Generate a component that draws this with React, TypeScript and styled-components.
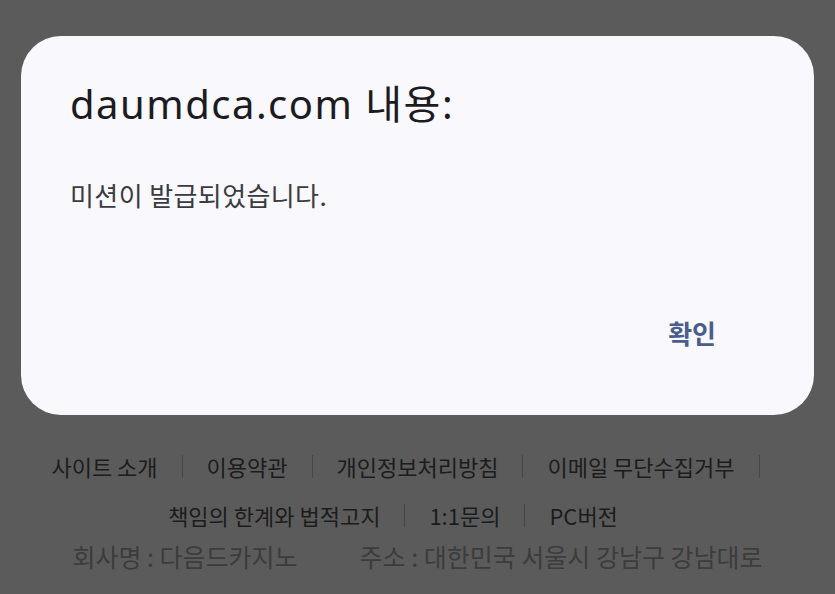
import { createGlobalStyle, styled } from "styled-components";

const GlobalStyle = createGlobalStyle`
  html, body {
    margin: 0;
    padding: 0;
    background: #5b5b5b;
    overflow: hidden;
  }
  body {
    font-family: "Noto Sans", "Noto Sans CJK KR", sans-serif;
  }
`;

const Page = styled.div`
  width: 835px;
  height: 594px;
  padding: 36px 21px 0;
  box-sizing: border-box;
`;

const Dialog = styled.div`
  height: 379px;
  box-sizing: border-box;
  background: #f8f8fd;
  border-radius: 40px;
  padding: 44px 49px 58px;
  display: flex;
  flex-direction: column;
`;

const Title = styled.h2`
  margin: 0;
  font-size: 40px;
  line-height: 48px;
  font-weight: 400;
  letter-spacing: 1.5px;
  color: #1c1c20;
`;

const Message = styled.p`
  margin: 50px 0 0;
  font-family: "Noto Sans CJK KR", sans-serif;
  font-size: 26px;
  line-height: 34px;
  letter-spacing: 0.4px;
  color: #3b3b3f;
`;

const Actions = styled.div`
  margin-top: auto;
  display: flex;
  justify-content: flex-end;
  padding-right: 25px;
`;

const OkButton = styled.button`
  border: none;
  background: transparent;
  padding: 8px 24px;
  font-family: "Noto Sans CJK KR", sans-serif;
  font-size: 26px;
  line-height: 32px;
  font-weight: 600;
  color: #4a5d8d;
  cursor: pointer;
`;

const Footer = styled.footer`
  margin-top: 37px;
  font-family: "Noto Sans CJK KR", sans-serif;
`;

const LinkRow = styled.ul`
  list-style: none;
  margin: 0 0 21px;
  padding: 0;
  display: flex;
  justify-content: center;
  align-items: center;
`;

const LinkItem = styled.li`
  font-size: 22px;
  line-height: 28px;
  color: #1c1c1c;
`;

const Divider = styled.span<{ $hidden?: boolean }>`
  width: 1px;
  height: 23px;
  margin: 0 24px;
  background: #474747;
  visibility: ${(p) => (p.$hidden ? "hidden" : "visible")};
`;

const InfoRow = styled.div`
  display: flex;
  justify-content: center;
  gap: 62px;
  margin-top: -10px;
`;

const InfoText = styled.span`
  font-size: 25px;
  line-height: 32px;
  color: #3c3c3c;
`;

const rows: { items: string[]; last: boolean }[] = [
  {
    items: ["사이트 소개", "이용약관", "개인정보처리방침", "이메일 무단수집거부"],
    last: false,
  },
  { items: ["책임의 한계와 법적고지", "1:1문의", "PC버전"], last: true },
];

function App() {
  return (
    <Page>
      <GlobalStyle />
      <Dialog>
        <Title>daumdca.com 내용:</Title>
        <Message>미션이 발급되었습니다.</Message>
        <Actions>
          <OkButton>확인</OkButton>
        </Actions>
      </Dialog>
      <Footer>
        {rows.map((row, r) => (
          <LinkRow key={r}>
            {row.items.map((item, i) => (
              <>
                <LinkItem key={item}>{item}</LinkItem>
                <Divider $hidden={row.last && i === row.items.length - 1} />
              </>
            ))}
          </LinkRow>
        ))}
        <InfoRow>
          <InfoText>회사명 : 다음드카지노</InfoText>
          <InfoText>주소 : 대한민국 서울시 강남구 강남대로</InfoText>
        </InfoRow>
      </Footer>
    </Page>
  );
}

export default App;
